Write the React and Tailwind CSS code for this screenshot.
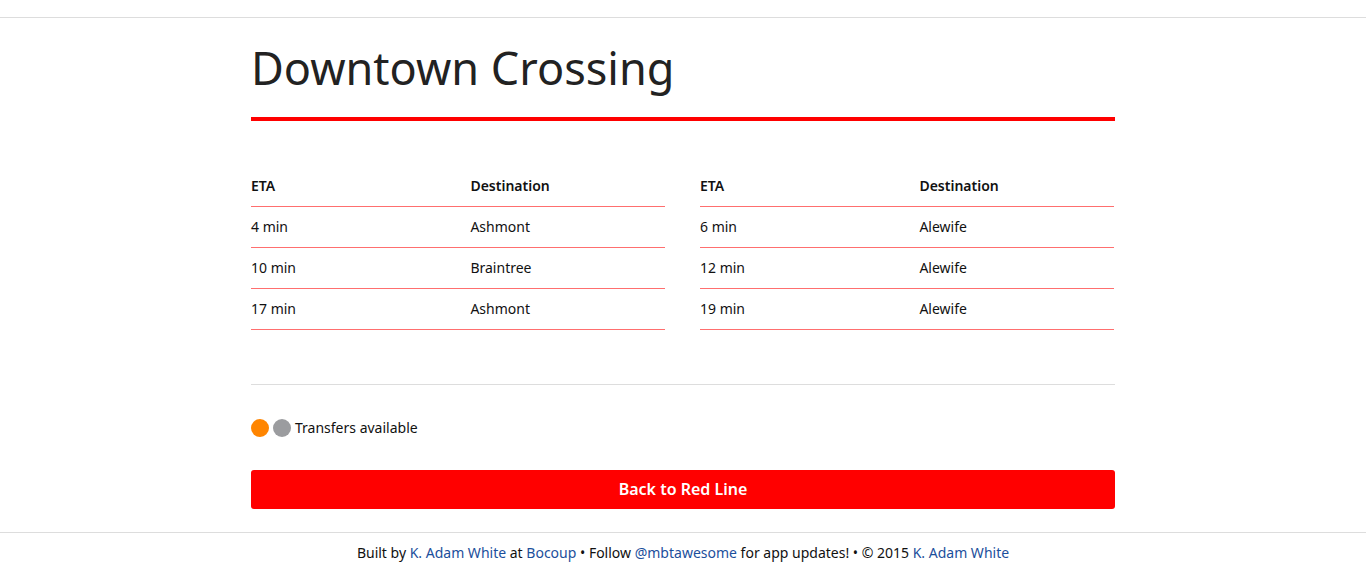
const trains = [
  {
    label: "Southbound",
    rows: [
      ["4 min", "Ashmont"],
      ["10 min", "Braintree"],
      ["17 min", "Ashmont"],
    ],
  },
  {
    label: "Northbound",
    rows: [
      ["6 min", "Alewife"],
      ["12 min", "Alewife"],
      ["19 min", "Alewife"],
    ],
  },
];

function Predictions({ label, rows }) {
  return (
    <table
      aria-label={label}
      className="w-full table-fixed border-separate border-spacing-0 text-left leading-5"
    >
      <thead>
        <tr>
          <th scope="col" className="w-[53%] border-b border-[#ff6f6f] py-2.5 font-semibold">ETA</th>
          <th scope="col" className="border-b border-[#ff6f6f] py-2.5 font-semibold">Destination</th>
        </tr>
      </thead>
      <tbody>
        {rows.map(([eta, destination]) => (
          <tr key={eta}>
            <td className="border-b border-[#ff6f6f] py-2.5">{eta}</td>
            <td className="border-b border-[#ff6f6f] py-2.5">{destination}</td>
          </tr>
        ))}
      </tbody>
    </table>
  );
}

function FooterLink({ href, children }) {
  return (
    <a href={href} className="text-[#1c4f9c] hover:underline">
      {children}
    </a>
  );
}

export default function App() {
  return (
    <div className="bg-white pt-[17px] font-['Noto_Sans',sans-serif] text-sm text-[#111]">
      <main className="border-y border-[#ddd] px-4 pb-[23px]">
        <div className="mx-auto w-full max-w-[864px]">
          <h1 className="border-b-4 border-[#f00] pt-5 pb-[19px] text-[45px] leading-[60px] text-[#222]">
            Downtown Crossing
          </h1>

          <section className="mt-[45px] grid grid-cols-2 gap-[35px] pr-px">
            {trains.map((t) => (
              <Predictions key={t.label} {...t} />
            ))}
          </section>

          <section className="mt-[54px] border-t border-[#ddd] pt-8">
            <p className="flex items-center gap-1 leading-[21px]">
              <span className="size-[18px] rounded-full bg-[#ff8500]" />
              <span className="size-[18px] rounded-full bg-[#9b9c9f]" />
              <span>Transfers available</span>
            </p>
          </section>

          <a
            href="#red"
            className="mt-8 block rounded-[3px] bg-[#f00] text-center text-base leading-[39px] font-semibold text-white"
          >
            Back to Red Line
          </a>
        </div>
      </main>

      <footer className="px-4 pt-2.5 pb-[17px] text-center leading-5">
        Built by <FooterLink href="#kadamwhite">K. Adam White</FooterLink> at{" "}
        <FooterLink href="#bocoup">Bocoup</FooterLink> • Follow{" "}
        <FooterLink href="#mbtawesome">@mbtawesome</FooterLink> for app updates! • © 2015{" "}
        <FooterLink href="#kadamwhite">K. Adam White</FooterLink>
      </footer>
    </div>
  );
}
